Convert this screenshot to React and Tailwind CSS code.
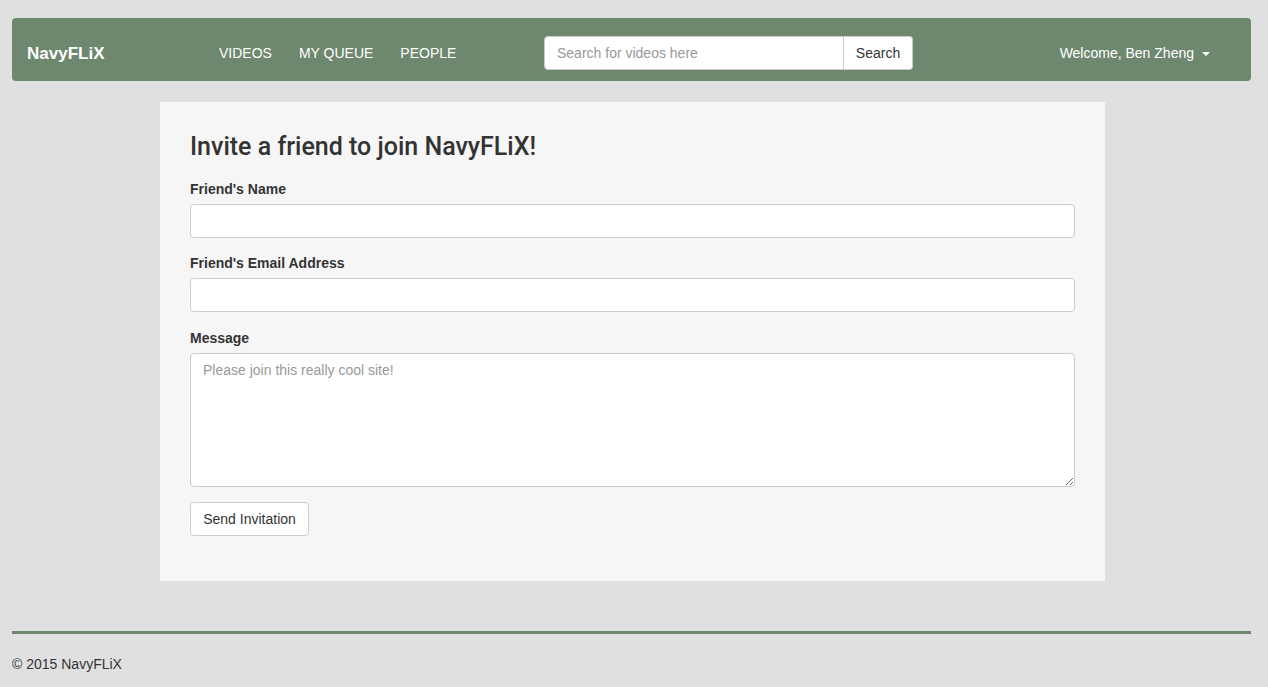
export default function App() {
  const font = { fontFamily: '"Liberation Sans", Arial, sans-serif' };
  return (
    <div className="min-h-[687px] bg-[#e0e0e0] text-[#333] text-[14px] pl-[12px] pr-[17px] pt-[18px]" style={font}>
      <nav className="h-[63px] bg-[#6e886f] rounded-[4px] flex items-start pt-[18px] pl-[15px] pr-[41px]">
        <div className="h-[34px] w-[192px] flex items-center">
          <span className="text-white font-bold text-[17px] leading-none">NavyFLiX</span>
        </div>
        <ul className="h-[34px] w-[325px] flex items-center gap-[27px] text-white text-[14px]">
          <li>VIDEOS</li>
          <li>MY QUEUE</li>
          <li>PEOPLE</li>
        </ul>
        <div className="flex">
          <input
            className="w-[300px] h-[34px] bg-white border border-[#ccc] rounded-l-[4px] px-[12px] text-[14px] outline-none placeholder:text-[#999]"
            placeholder="Search for videos here"
          />
          <button className="h-[34px] w-[69px] bg-white border border-[#ccc] border-l-0 rounded-r-[4px] text-[14px] text-[#333]">
            Search
          </button>
        </div>
        <div className="ml-auto h-[34px] flex items-center text-white gap-[8px]">
          <span>Welcome, Ben Zheng</span>
          <span className="w-0 h-0 border-l-[4px] border-r-[4px] border-t-[4px] border-l-transparent border-r-transparent border-t-white mt-[1px]"></span>
        </div>
      </nav>

      <main className="w-[945px] ml-[148px] mt-[21px] bg-[#f6f6f6] px-[30px] pt-[32px] pb-[45px]">
        <h2
          className="text-[25px] leading-[26px] font-medium mb-[19px]"
          style={{ fontFamily: 'Roboto, "Liberation Sans", Arial, sans-serif' }}
        >
          Invite a friend to join NavyFLiX!
        </h2>
        <form className="flex flex-col">
          <label className="font-bold leading-[20px] mb-[5px]">Friend's Name</label>
          <input className="h-[34px] w-full bg-white border border-[#ccc] rounded-[4px] px-[12px] mb-[15px] outline-none" />
          <label className="font-bold leading-[20px] mb-[5px]">Friend's Email Address</label>
          <input className="h-[34px] w-full bg-white border border-[#ccc] rounded-[4px] px-[12px] mb-[16px] outline-none" />
          <label className="font-bold leading-[20px] mb-[5px]">Message</label>
          <textarea
            className="h-[134px] w-full bg-white border border-[#ccc] rounded-[4px] px-[12px] py-[6px] leading-[20px] mb-[15px] outline-none placeholder:text-[#999]"
            placeholder="Please join this really cool site!"
          ></textarea>
          <div>
            <button type="button" className="h-[34px] px-[12px] w-[119px] bg-white border border-[#ccc] rounded-[4px] text-[#333]">
              Send Invitation
            </button>
          </div>
        </form>
      </main>

      <footer className="mt-[50px]">
        <div className="h-[3px] bg-[#6e886f]"></div>
        <p className="pt-[20px] leading-[20px]">© 2015 NavyFLiX</p>
      </footer>
    </div>
  );
}
